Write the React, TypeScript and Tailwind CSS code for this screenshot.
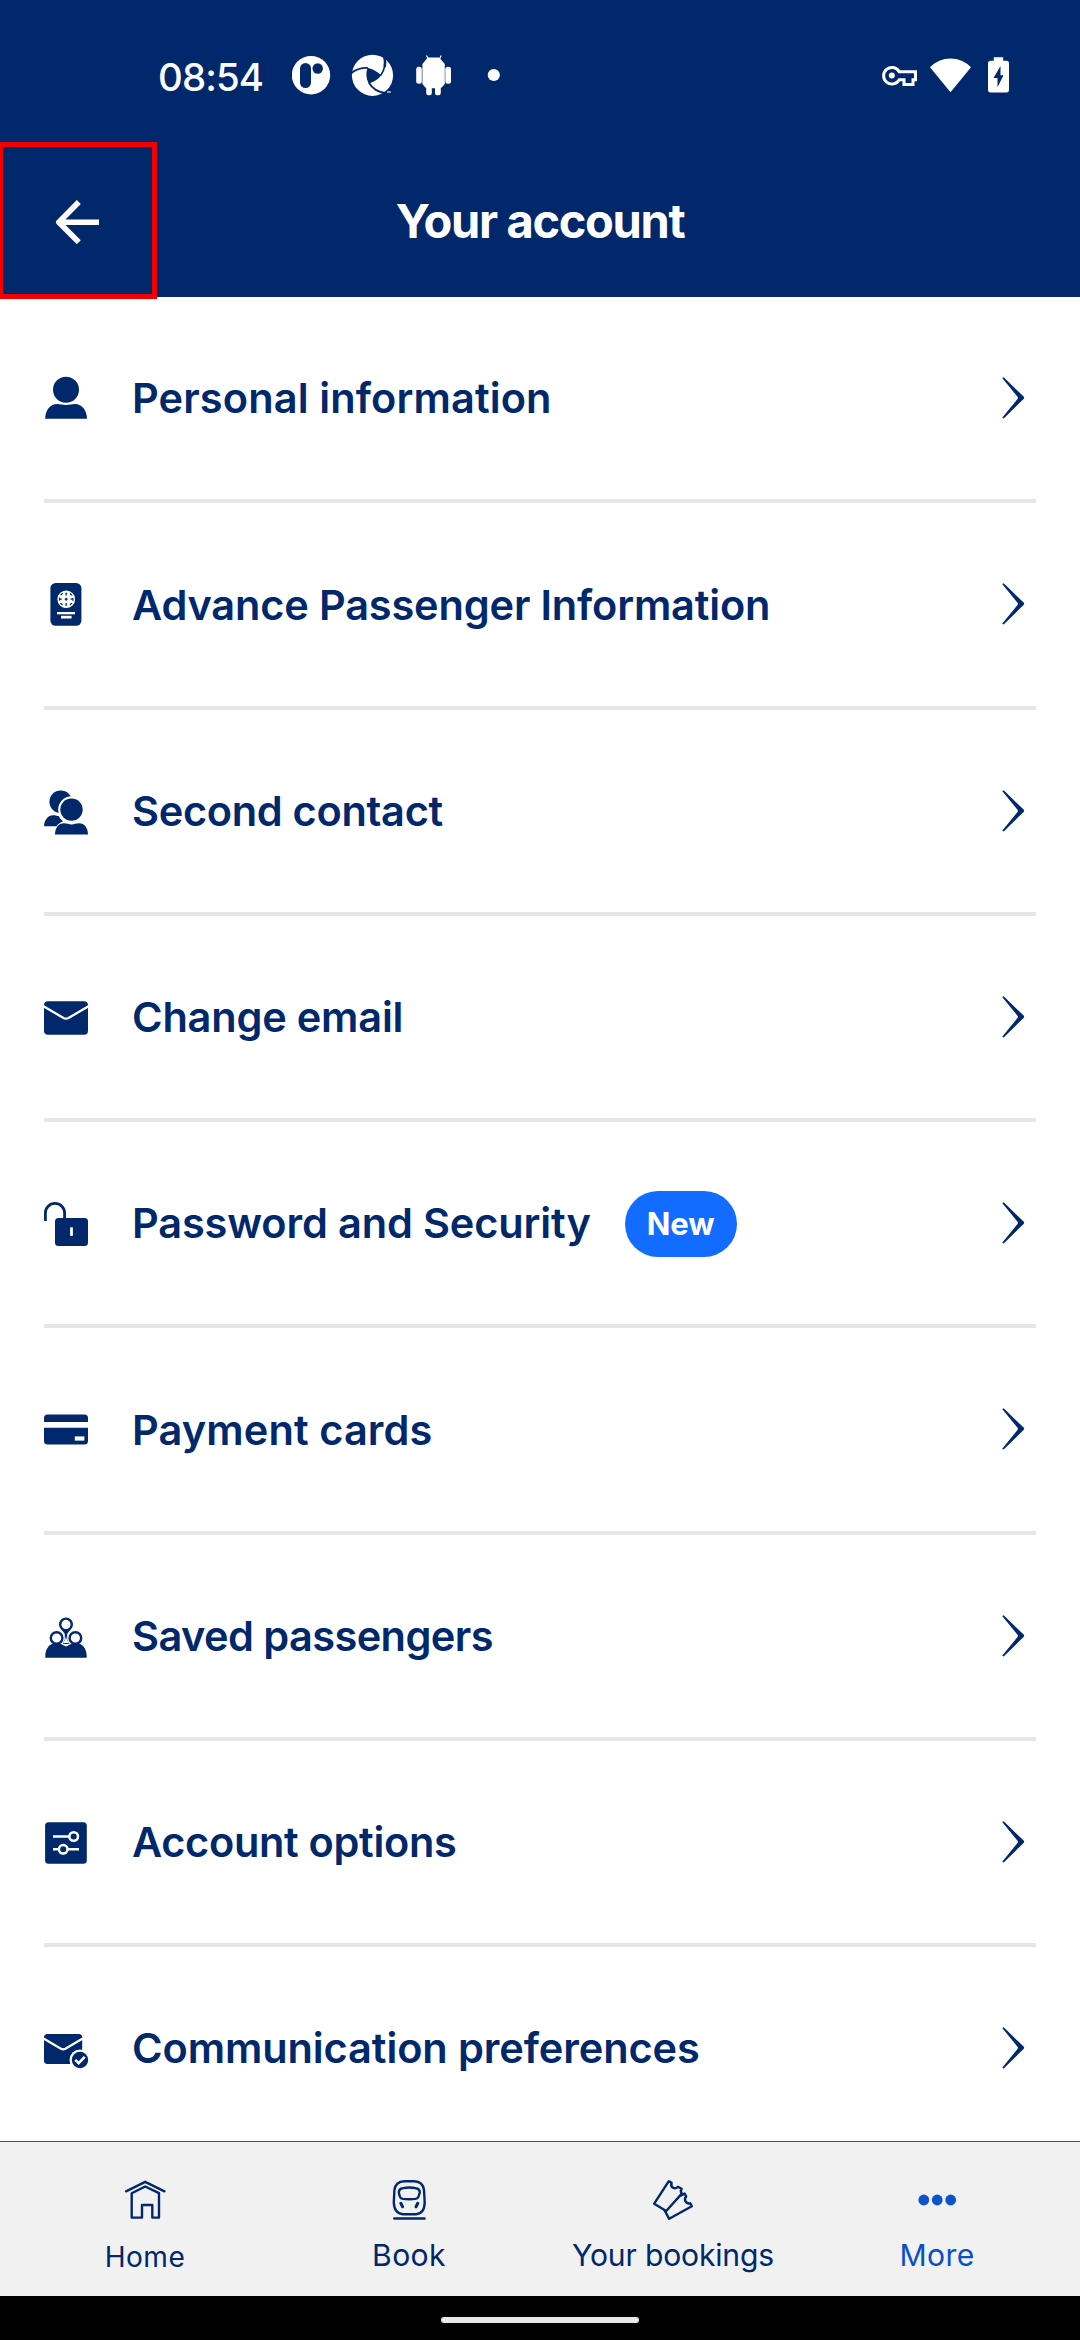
import React from "react";

const NAVY = "#00286a";

function PersonIcon() {
  return (
    <>
      <circle cx="22" cy="13.8" r="13" />
      <path d="M1.2 42.8C1.2 34.5 6 28 13 28c3.500 0 5 1 9 1s5.500-1 9-1c7 0 12 6.500 12 14.800z" />
    </>
  );
}

function PassportIcon() {
  return (
    <>
      <rect x="6.400" y="1" width="31" height="42.800" rx="5.200" />
      <circle cx="22.200" cy="17.200" r="8.800" fill="#fff" />
      <g fill="none" stroke={NAVY} strokeWidth="1.300">
        <circle cx="22.200" cy="17.200" r="6.700" strokeDasharray="3.200 2.060" strokeDashoffset="1.600" />
        <path d="M22.200 11v12.400M16 17.200h12.400" strokeDasharray="3 1.700" />
      </g>
      <g fill="none" stroke="#fff" strokeWidth="1.700">
        <ellipse cx="22.200" cy="17.200" rx="3.600" ry="7.600" />
        <path d="M14 14.300h16.400M14 20.100h16.400" />
      </g>
      <rect x="13" y="30" width="18" height="2.300" fill="#fff" />
      <rect x="17" y="33.800" width="10.600" height="2.700" fill="#fff" />
    </>
  );
}

function ContactsIcon() {
  return (
    <>
      <circle cx="16.700" cy="12.800" r="11.300" />
      <path d="M0 37.300C.3 31 4 26.300 9 26.300c2.500 0 3.500.7 5.600.8 1.800 3 2.800 3.800 4.500 5.200-3 1.200-5.300 2.800-6.600 5z" />
      <circle cx="27.500" cy="20.600" r="13.300" fill="#fff" />
      <circle cx="27.500" cy="20.600" r="11.200" />
      <path d="M11 45.500C11.200 38.500 14.500 34.200 20 34.200c3 0 4.500 1.200 7.500 1.200s4.500-1.200 7.500-1.200c5.500 0 8.800 4.300 9 11.300z" />
    </>
  );
}

function MailIcon() {
  return (
    <>
      <rect x="0" y="6.200" width="44" height="33.600" rx="4" />
      <path d="M-.5 11.200 19.500 23q2.500 1.300 5 0L44.500 11.200" fill="none" stroke="#fff" strokeWidth="2.300" />
    </>
  );
}

function UnlockIcon() {
  return (
    <>
      <path d="M1.400 20v-8a9.600 9.600 0 0 1 19.200 0v6" fill="none" stroke={NAVY} strokeWidth="2.800" />
      <rect x="11" y="17" width="33" height="28" rx="3.500" />
      <rect x="26.100" y="26.300" width="2.800" height="8.800" rx=".8" fill="#fff" />
    </>
  );
}

function CardIcon() {
  return (
    <>
      <path d="M0 15v-4a3.500 3.500 0 0 1 3.500-3.500h37A3.500 3.500 0 0 1 44 11v4zM0 20.800h44V34a3.500 3.500 0 0 1-3.500 3.500h-37A3.500 3.500 0 0 1 0 34z" />
      <rect x="30.800" y="29.400" width="9.600" height="4.200" fill="#fff" />
    </>
  );
}

function PassengersIcon() {
  return (
    <>
      <path d="M16.800 14.500 20.800 20v5.500l-2.300 4.500h7l-2.300-4.500V20l4-5.500z" />
      <path d="M1.300 43.700C.8 36 4.500 31 9 29.500h7l6 3 6-3h7c4.500 1.500 8.200 6.500 7.700 14.200z" />
      <path d="m22 22.500.9 3.300 2.300 3.700L22 28.700l-3.200.8 2.300-3.700z" fill="#fff" />
      <g fill="#fff" stroke={NAVY} strokeWidth="2.400">
        <circle cx="22" cy="10.400" r="5.800" />
        <circle cx="12.600" cy="24" r="5.800" />
        <circle cx="31.400" cy="24" r="5.800" />
      </g>
    </>
  );
}

function SlidersIcon() {
  return (
    <>
      <rect x="1.100" y="2.200" width="41.700" height="41.600" rx="3.500" />
      <g fill="none" stroke="#fff" strokeWidth="2.500">
        <path d="M9 16.600h16.200M9 29.300h5.800M23.400 29.300H35" />
        <circle cx="29.700" cy="16.500" r="4.300" />
        <circle cx="19.200" cy="29.300" r="4.300" />
      </g>
    </>
  );
}

function MailCheckIcon() {
  return (
    <>
      <rect x="0" y="8" width="38.200" height="30" rx="3.500" />
      <path d="M-.5 12.500 17 22.800q2.200 1.200 4.400 0L38.700 12.500" fill="none" stroke="#fff" strokeWidth="2.200" />
      <circle cx="36" cy="34" r="10.500" fill="#fff" />
      <circle cx="36" cy="34" r="8.200" />
      <path d="m31.300 33.800 3.400 3.400 6-6.400" fill="none" stroke="#fff" strokeWidth="2.600" />
    </>
  );
}

function Chevron() {
  return (
    <svg width="23" height="42" viewBox="0 0 23 42" fill={NAVY} className="ml-auto shrink-0">
      <path d="M.2.900 1.700.3 21.600 19.600q1.100 1.200 0 2.300L1.700 41.400.2 40.700 15.500 21.900q.8-1.100 0-2.200z" />
    </svg>
  );
}

type Item = { label: string; tracking: string; icon: () => React.ReactElement; badge?: string };

const items: Item[] = [
  { label: "Personal information", tracking: "tracking-[0.13px]", icon: PersonIcon },
  { label: "Advance Passenger Information", tracking: "tracking-[-0.16px]", icon: PassportIcon },
  { label: "Second contact", tracking: "tracking-[-0.3px]", icon: ContactsIcon },
  { label: "Change email", tracking: "tracking-[-0.2px]", icon: MailIcon },
  { label: "Password and Security", tracking: "tracking-[-0.14px]", icon: UnlockIcon, badge: "New" },
  { label: "Payment cards", tracking: "tracking-[0.11px]", icon: CardIcon },
  { label: "Saved passengers", tracking: "tracking-[-0.57px]", icon: PassengersIcon },
  { label: "Account options", tracking: "tracking-[-0.32px]", icon: SlidersIcon },
  { label: "Communication preferences", tracking: "tracking-[-0.09px]", icon: MailCheckIcon },
];

function Row({ item }: { item: Item }) {
  const Icon = item.icon;
  return (
    <li className="flex h-[206.25px] items-center border-b-4 border-[#e6e6e6] pr-[11px] last:border-transparent">
      <svg width="44" height="44" viewBox="0 0 44 44" fill={NAVY} className="mr-11 shrink-0 overflow-visible">
        <Icon />
      </svg>
      <span className={`pt-[2px] text-[41.5px] leading-none font-semibold whitespace-nowrap ${item.tracking}`}>
        {item.label}
      </span>
      {item.badge && (
        <span className="mt-[2px] ml-[34px] flex h-[66px] w-[112px] items-center justify-center rounded-full bg-[#126cff] text-[31px] font-bold tracking-[-0.09px] text-white">
          {item.badge}
        </span>
      )}
      <Chevron />
    </li>
  );
}

function StatusBar() {
  return (
    <div className="flex h-[142px] items-start pt-[50px] pr-[71px] pl-[158px]">
      <span className="w-[134px] text-[38.4px] leading-[54px] font-medium tracking-[-0.9px]">08:54</span>
      <svg width="208" height="50" viewBox="292 50 208 50" fill="#fff">
        <circle cx="311" cy="75.200" r="19.200" />
        <g fill={NAVY}>
          <rect x="300" y="63" width="11" height="25" rx="5.500" />
          <circle cx="317.700" cy="68.500" r="5.200" />
        </g>
        <circle cx="372.500" cy="75.300" r="20.600" />
        <path d="M367.500 67.800q8.300 2.200 13.600 7.600-3.800 5.300-12.400 8.200-3.900-7.800-1.200-15.800z" fill={NAVY} />
        <g fill="none" stroke={NAVY} strokeWidth="1.700">
          <path d="M351 73.300q7-5.700 17-5.300" />
          <path d="M384.700 56.500q2.300 10-4.200 18.900" />
          <path d="M368.900 82.500q5 9.500 17.500 10.500" />
        </g>
        <path d="M384.500 57.500q1.200 5 .2 9.500" fill="none" stroke={NAVY} strokeWidth="2.600" />
        <path d="M387 92h3.800" stroke="#fff" strokeWidth="1.200" />
        <path d="M427.800 57.600h11.400l5.600 6.500v20l-3.400 3.600h-.6v5.200q0 2.300-2.200 2.300h-1.800q-1.800 0-1.800-2.300v-4.700h-3.200v4.700q0 2.300-1.800 2.300h-1.600q-2.200 0-2.200-2.300v-5.200h-.6l-3.200-3.600v-20z" />
        <path d="m426.500 55.500 2 4M441.200 55.500l-2 4" stroke="#fff" strokeWidth="1.200" />
        <rect x="416.200" y="66.800" width="5.600" height="17" rx="2.500" />
        <rect x="445.300" y="66.800" width="5.700" height="17" rx="2.500" />
        <circle cx="493.800" cy="75" r="6.100" />
      </svg>
      <svg width="128" height="50" viewBox="880 50 128 50" fill="#fff" className="ml-auto">
        <g fill="none" stroke="#fff" strokeWidth="3">
          <path d="M898.200 71.700h16.300v8H912v4.700h-9v-4.700h-4.800a8.300 8.300 0 1 1 0-8z" />
        </g>
        <path d="M898 75.800h12M907.500 75v6" fill="none" stroke={NAVY} strokeWidth="2.500" />
        <circle cx="890.800" cy="75.600" r="3" />
        <path d="M949.500 92.300 929 67.300q8.500-8.900 20.500-8.900T970 67.300z" />
        <path d="M992.800 57.300h9.400v3.500h3.300q2.500 0 2.500 2.500v26.500q0 2.700-2.500 2.700h-16q-2.500 0-2.500-2.700V63.300q0-2.500 2.500-2.500h3.300z" />
        <path d="M999.500 66v9.200h3l-6 12V78h-4z" fill={NAVY} />
      </svg>
    </div>
  );
}

function HomeIcon() {
  return (
    <>
      <path d="M1 11.300 20.200 1.800 39.500 11.300" />
      <path d="M6.700 37.600V13.200L20.200 6.500l13.800 6.700v24.400h-6.700V25H17v12.600z" />
    </>
  );
}

function TrainIcon() {
  return (
    <>
      <path d="M15.500 1.200h9.500Q34 1.600 35 10l.7 12.500Q35.500 33.600 27 34.200H14Q5.300 33.600 4.800 22.500L5.400 10Q6.500 1.600 15.500 1.200z" />
      <path d="M14 8.200q6.200-1.400 12.600 0 4.200.6 4.200 4.300l-1.200 4q-.6 2-3 2.400-6.500.8-12.800 0-2.500-.4-3-2.400l-1-4q0-3.700 4.200-4.300z" />
      <path d="m11.800 23.300 1.800 3.500M28.800 23.300 27 26.800" strokeWidth="3" />
      <path d="M5.300 38.500h30.200" />
    </>
  );
}

function TicketIcon() {
  return (
    <>
      <path d="M1.200 23.700 15.800 1.200l2.800 1.700q-1.200 3.400 1.400 4.900 2.600 1.500 4.900-1.100l3.700 2.100q-1.600 2.800.2 4.800L13.200 31z" />
      <path d="m11.500 30.200 4.700 8.600 22.600-12.600-1.500-2.900q-3.300.8-4.800-1.900-1.400-2.600.7-5l-1.600-2.800-4 2" />
    </>
  );
}

const tabs = [
  { label: "Home", icon: <HomeIcon />, text: "pt-[2px] text-[28.1px] tracking-[0.47px] text-[#00286a]" },
  { label: "Book", icon: <TrainIcon />, text: "text-[30.1px] tracking-[0.39px] text-[#00286a]" },
  { label: "Your bookings", icon: <TicketIcon />, text: "text-[30.1px] tracking-[-0.18px] text-[#00286a]" },
  {
    label: "More",
    icon: (
      <g fill="#0b54cc" stroke="none">
        <circle cx="6.800" cy="20" r="5.400" />
        <circle cx="20.200" cy="20" r="5.400" />
        <circle cx="33.700" cy="20" r="5.400" />
      </g>
    ),
    text: "text-[30.1px] tracking-[0.39px] text-[#0b50c2]",
  },
];

export default function App() {
  return (
    <div className="flex h-[2340px] w-[1080px] flex-col overflow-hidden bg-white font-['Inter',sans-serif] text-[#00286a]">
      <header className="relative h-[297px] shrink-0 bg-[#00286a] text-white">
        <StatusBar />
        <div className="flex h-[155px] items-center justify-center pt-[1px]">
          <h1 className="text-[47px] leading-none font-bold tracking-[-1.34px]">Your account</h1>
        </div>
        <button
          aria-label="Back"
          className="absolute top-[142px] left-0 flex h-[157px] w-[157px] items-center border-[5px] border-l-[3px] border-[#f50000] pt-[2px] pl-[52px]"
        >
          <svg width="44" height="44" viewBox="0 0 44 44" fill="none" stroke="#fff" strokeWidth="5.600">
            <path d="M44 22.200H4M23.800 2 3.800 22.200l20 20" strokeLinejoin="round" />
          </svg>
        </button>
      </header>

      <ul className="h-[1844px] shrink-0 overflow-hidden px-11">
        {items.map((item) => (
          <Row key={item.label} item={item} />
        ))}
      </ul>

      <nav className="grid h-[155px] shrink-0 grid-cols-4 border-t border-[#1c5ba0] bg-[#f1f1f1] pt-[38px] pr-[11px] pl-[13px]">
        {tabs.map((tab) => (
          <div key={tab.label} className="flex flex-col items-center">
            <svg
              width="40"
              height="40"
              viewBox="0 0 40 40"
              fill="none"
              stroke={NAVY}
              strokeWidth="2.400"
              strokeLinecap="round"
              strokeLinejoin="round"
              className="shrink-0 overflow-visible"
            >
              {tab.icon}
            </svg>
            <span className={`mt-[15px] leading-[40px] whitespace-nowrap ${tab.text}`}>{tab.label}</span>
          </div>
        ))}
      </nav>

      <div className="flex h-11 shrink-0 items-center justify-center bg-black pt-1">
        <div className="h-1.5 w-[198px] rounded-full bg-[#ebe6eb]" />
      </div>
    </div>
  );
}
